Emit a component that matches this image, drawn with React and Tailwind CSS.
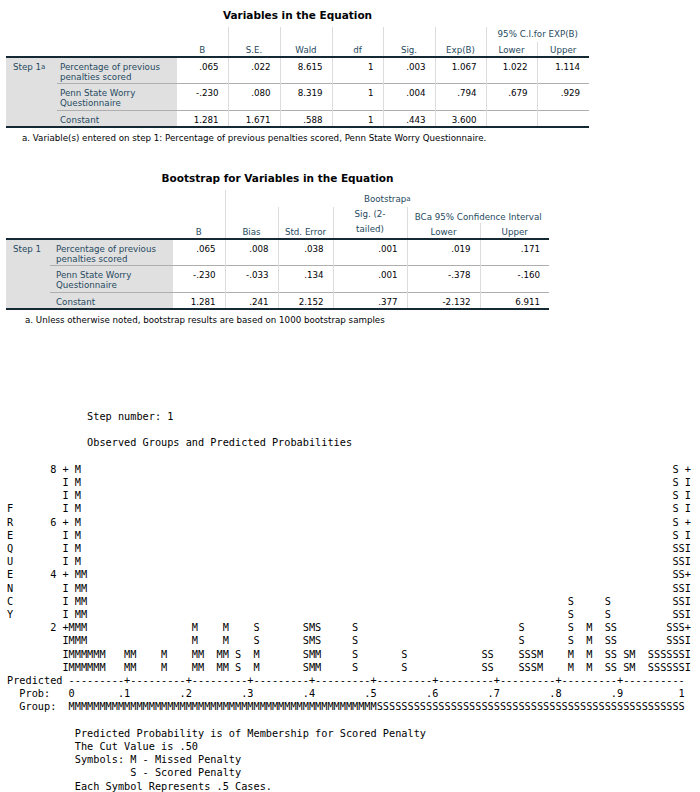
const COLS = 111;

// put text pieces at fixed character columns
function place(parts) {
  const a = new Array(COLS).fill(" ");
  parts.forEach(([c, t]) => {
    for (let i = 0; i < t.length; i++) a[c + i] = t[i];
  });
  return a.join("").replace(/\s+$/, "");
}

// [column, first row from top, symbols down to the bottom row]
const BARS = [
  [10, 12, "MMMM"],
  [11, 0, "MMMMMMMMMMMMMMMM"],
  [12, 8, "MMMMMMMM"],
  [13, 14, "MM"], [14, 14, "MM"], [15, 14, "MM"],
  [19, 14, "MM"], [20, 14, "MM"],
  [25, 14, "MM"],
  [30, 12, "MMMM"], [31, 14, "MM"],
  [34, 14, "MM"], [35, 12, "MMMM"],
  [37, 14, "SS"],
  [40, 12, "SSMM"],
  [48, 12, "SSSS"], [49, 12, "MMMM"], [50, 12, "SSMM"],
  [56, 12, "SSSS"],
  [64, 14, "SS"],
  [77, 14, "SS"], [78, 14, "SS"],
  [83, 12, "SSSS"], [84, 14, "SS"], [85, 14, "SS"], [86, 14, "MM"],
  [91, 10, "SSSSMM"],
  [94, 12, "MMMM"],
  [97, 10, "SSSSSS"],
  [98, 12, "SSSS"],
  [100, 14, "SS"], [101, 14, "MM"],
  [104, 14, "SS"], [105, 14, "SS"], [106, 14, "SS"],
  [107, 12, "SSSS"],
  [108, 0, "SSSSSSSSSSSSSSSS"],
  [109, 6, "SSSSSSSSSS"],
];

function plotLines() {
  const lines = [];
  lines.push(place([[13, "Step number: 1"]]));
  lines.push("");
  lines.push(place([[13, "Observed Groups and Predicted Probabilities"]]));
  lines.push("");
  for (let r = 0; r < 16; r++) {
    const parts = [];
    if (r >= 3 && r <= 11) parts.push([0, "FREQUENCY"[r - 3]]);
    const tick = r % 4 === 0;
    if (tick) parts.push([7, String(8 - r / 2)]);
    parts.push([9, tick ? "+" : "I"]);
    parts.push([110, tick ? "+" : "I"]);
    BARS.forEach(([c, top, s]) => {
      if (r >= top) parts.push([c, s[r - top]]);
    });
    lines.push(place(parts));
  }
  lines.push("Predicted " + "---------+".repeat(9) + "----------");
  const prob = [[2, "Prob:"], [10, "0"], [109, "1"]];
  for (let i = 1; i <= 9; i++) prob.push([8 + i * 10, "." + i]);
  lines.push(place(prob));
  lines.push(place([[2, "Group:"], [10, "M".repeat(50) + "S".repeat(50)]]));
  lines.push("");
  lines.push(place([[11, "Predicted Probability is of Membership for Scored Penalty"]]));
  lines.push(place([[11, "The Cut Value is .50"]]));
  lines.push(place([[11, "Symbols: M - Missed Penalty"]]));
  lines.push(place([[20, "S - Scored Penalty"]]));
  lines.push(place([[11, "Each Symbol Represents .5 Cases."]]));
  return lines.join("\n");
}

const TH = "align-bottom text-center font-normal text-[#264a60] whitespace-nowrap";
const SEP = "border-l border-l-[#dcdcdc]";
const STEP = "bg-[#e0e0e0] align-top text-left pl-[7px] pt-[4px] text-[#264a60] whitespace-nowrap";
const VAR = "bg-[#e0e0e0] align-top text-left pt-[4px] text-[#264a60]";
const NUM = "align-top text-right pt-[4px] pr-[9px] text-[#010205]";
const ROWLINE = "border-t border-t-[#aeaeae]";

const VARS1 = [
  ["Percentage of previous penalties scored", [".065", ".022", "8.615", "1", ".003", "1.067", "1.022", "1.114"]],
  ["Penn State Worry Questionnaire", ["-.230", ".080", "8.319", "1", ".004", ".794", ".679", ".929"]],
  ["Constant", ["1.281", "1.671", ".588", "1", ".443", "3.600", "", ""]],
];

const VARS2 = [
  ["Percentage of previous penalties scored", [".065", ".008", ".038", ".001", ".019", ".171"]],
  ["Penn State Worry Questionnaire", ["-.230", "-.033", ".134", ".001", "-.378", "-.160"]],
  ["Constant", ["1.281", ".241", "2.152", ".377", "-2.132", "6.911"]],
];

function BodyRows({ rows, step, varPad }) {
  return rows.map(([name, vals], i) => (
    <tr
      key={name}
      className={
        i === 0
          ? "border-t-2 border-t-[#152935]"
          : i === 2
          ? "border-b-2 border-b-[#152935]"
          : ""
      }
    >
      {i === 0 && (
        <td rowSpan={3} className={STEP}>
          {step}
        </td>
      )}
      <td className={`${VAR} ${varPad} ${i === 1 ? "pb-[2px]" : "pb-[1px]"} ${i > 0 ? ROWLINE : ""}`}>
        {name}
      </td>
      {vals.map((v, j) => (
        <td key={j} className={`${NUM} ${j > 0 ? SEP : ""} ${i > 0 ? ROWLINE : ""}`}>
          {v}
        </td>
      ))}
    </tr>
  ));
}

function EquationTable() {
  return (
    <div>
      <div className="ml-[6px] w-[583px] pt-[6px] pb-[3px] text-center text-[10.5px] leading-[18px] font-bold text-[#010205]">
        Variables in the Equation
      </div>
      <table className="ml-[6px] w-[583px] table-fixed border-collapse text-[8.7px] leading-[10px]">
        <colgroup>
          <col className="w-[51px]" />
          <col className="w-[120px]" />
          <col className="w-[51px]" />
          <col className="w-[52px]" />
          <col className="w-[52px]" />
          <col className="w-[51px]" />
          <col className="w-[52px]" />
          <col className="w-[51px]" />
          <col className="w-[51px]" />
          <col className="w-[52px]" />
        </colgroup>
        <thead>
          <tr className="h-[15px]">
            <th colSpan={2} rowSpan={2}></th>
            <th rowSpan={2} className={`${TH} pb-[1px]`}>B</th>
            <th rowSpan={2} className={`${TH} ${SEP} pb-[1px]`}>S.E.</th>
            <th rowSpan={2} className={`${TH} ${SEP} pb-[1px]`}>Wald</th>
            <th rowSpan={2} className={`${TH} ${SEP} pb-[1px]`}>df</th>
            <th rowSpan={2} className={`${TH} ${SEP} pb-[1px]`}>Sig.</th>
            <th rowSpan={2} className={`${TH} ${SEP} pb-[1px]`}>Exp(B)</th>
            <th colSpan={2} className={`${TH} ${SEP} pb-[3px]`}>95% C.I.for EXP(B)</th>
          </tr>
          <tr className="h-[15px]">
            <th className={`${TH} ${SEP} pb-[1px]`}>Lower</th>
            <th className={`${TH} ${SEP} pb-[1px]`}>Upper</th>
          </tr>
        </thead>
        <tbody>
          <BodyRows
            rows={VARS1}
            varPad="pl-[3px]"
            step={
              <>
                Step 1<sup className="text-[7px] leading-none relative -top-[1px]">a</sup>
              </>
            }
          />
        </tbody>
      </table>
      <div className="ml-[22px] mt-[5px] text-[8.7px] leading-[10px] text-[#010205] whitespace-nowrap">
        a. Variable(s) entered on step 1: Percentage of previous penalties scored, Penn State Worry Questionnaire.
      </div>
    </div>
  );
}

function BootstrapTable() {
  return (
    <div className="mt-[26px]">
      <div className="ml-[6px] w-[543px] pb-[3px] text-center text-[10.5px] leading-[18px] font-bold text-[#010205]">
        Bootstrap for Variables in the Equation
      </div>
      <table className="ml-[6px] w-[543px] table-fixed border-collapse text-[8.7px] leading-[10px]">
        <colgroup>
          <col className="w-[44px]" />
          <col className="w-[123px]" />
          <col className="w-[52px]" />
          <col className="w-[53px]" />
          <col className="w-[55px]" />
          <col className="w-[74px]" />
          <col className="w-[73px]" />
          <col className="w-[69px]" />
        </colgroup>
        <thead>
          <tr className="h-[17px]">
            <th colSpan={2} rowSpan={3}></th>
            <th rowSpan={3} className={`${TH} pb-[1px]`}>B</th>
            <th colSpan={5} className={`${TH} ${SEP} pb-[3px]`}>
              Bootstrap<sup className="text-[7px] leading-none relative -top-[1px]">a</sup>
            </th>
          </tr>
          <tr className="h-[15px]">
            <th rowSpan={2} className={`${TH} ${SEP} pb-[1px]`}>Bias</th>
            <th rowSpan={2} className={`${TH} ${SEP} pb-[1px]`}>Std. Error</th>
            <th rowSpan={2} className={`${TH} ${SEP} pb-[1px] leading-[15px]`}>
              Sig. (2-
              <br />
              tailed)
            </th>
            <th colSpan={2} className={`${TH} ${SEP} pb-[1px]`}>BCa 95% Confidence Interval</th>
          </tr>
          <tr className="h-[15px]">
            <th className={`${TH} ${SEP} pb-[1px]`}>Lower</th>
            <th className={`${TH} ${SEP} pb-[1px]`}>Upper</th>
          </tr>
        </thead>
        <tbody>
          <BodyRows rows={VARS2} varPad="pl-[6px]" step="Step 1" />
        </tbody>
      </table>
      <div className="ml-[25px] mt-[5px] text-[8.7px] leading-[10px] text-[#010205] whitespace-nowrap">
        a. Unless otherwise noted, bootstrap results are based on 1000 bootstrap samples
      </div>
    </div>
  );
}

export default function App() {
  return (
    <div className="w-[700px] h-[792px] overflow-hidden bg-white font-['DejaVu_Sans',sans-serif]">
      <EquationTable />
      <BootstrapTable />
      <pre className="mt-[85px] pl-[7px] font-['DejaVu_Sans_Mono',monospace] text-[10.24px] leading-[13.2px] text-black whitespace-pre">
        {plotLines()}
      </pre>
    </div>
  );
}
